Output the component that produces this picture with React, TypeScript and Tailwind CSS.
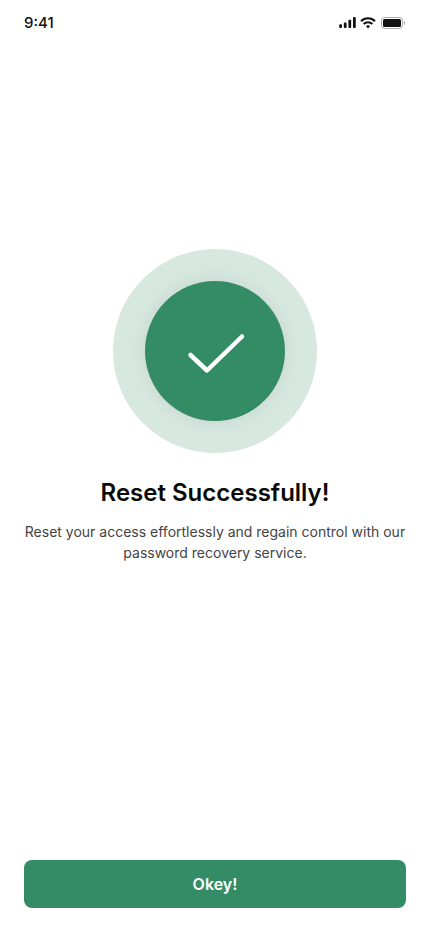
import React from "react";

export default function App() {
  return (
    <div className="flex h-[932px] w-[430px] flex-col overflow-hidden bg-white font-['Inter',sans-serif]">
      <div className="flex h-[46px] items-center justify-between pl-[24px] pr-[25px] pb-[1px]">
        <span className="text-[15px] font-medium leading-[20px] text-[#111111]">9:41</span>
        <div className="flex items-center gap-[4px]">
          <svg width="17" height="11" viewBox="0 0 18 12" fill="#111">
            <rect x="0" y="8" width="3" height="4" rx="1" />
            <rect x="5" y="6" width="3" height="6" rx="1" />
            <rect x="10" y="3" width="3" height="9" rx="1" />
            <rect x="15" y="0" width="3" height="12" rx="1" />
          </svg>
          <svg width="16" height="12" viewBox="0 0 16 12" fill="none" stroke="#111" strokeWidth="2">
            <path d="M1 4.200a10 10 0 0 1 14 0" />
            <path d="M3.600 7a6.300 6.300 0 0 1 8.800 0" />
            <path d="M8 8.200c-.9 0-1.600.3-2.100.8L8 11.500 10.100 9c-.5-.5-1.200-.8-2.100-.8Z" fill="#111" stroke="none" />
          </svg>
          <svg width="24" height="12" viewBox="0 0 24 12" className="ml-[1px]">
            <rect x="0.5" y="0.500" width="21" height="11" rx="3" fill="none" stroke="#111" strokeOpacity="0.35" />
            <rect x="2" y="2" width="18" height="8" rx="1.500" fill="#111" />
            <path d="M23 4v4c.7-.3 1-1.100 1-2s-.3-1.700-1-2Z" fill="#111" fillOpacity="0.4" />
          </svg>
        </div>
      </div>

      <div className="flex flex-1 flex-col items-center px-[24px] pt-[203px]">
        <div className="flex h-[204px] w-[204px] items-center justify-center rounded-full bg-[#d7e8e0]">
          <div className="flex h-[140px] w-[140px] items-center justify-center rounded-full bg-[#348c66] shadow-[0_0_20px_rgba(0,0,0,0.08)]">
            <svg width="60" height="48" viewBox="0 0 60 48" fill="none" className="mt-[4px] ml-[1px]">
              <path d="M4.500 26 L21 41.500 L56 7.500" stroke="#fff" strokeWidth="4.500" strokeLinecap="round" strokeLinejoin="round" />
            </svg>
          </div>
        </div>
        <h1 className="mt-[24px] text-center text-[24px] font-semibold leading-[32px] text-[#0a0a0a]">
          Reset Successfully!
        </h1>
        <p className="mt-[12px] w-full text-center text-[14px] leading-[21px] text-[#444444]">
          Reset your access effortlessly and regain control with our password recovery service.
        </p>
      </div>

      <div className="px-[24px] pb-[24px]">
        <button className="h-[48px] w-full rounded-[8px] bg-[#348c66] text-center text-[16px] font-semibold text-white">
          Okey!
        </button>
      </div>
    </div>
  );
}
